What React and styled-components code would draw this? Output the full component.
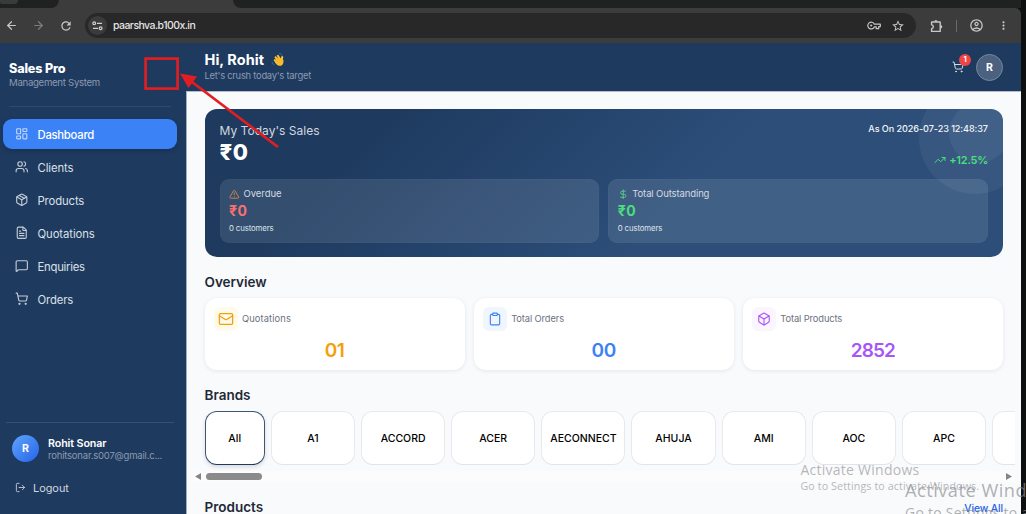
import React from 'react';
import styled, { createGlobalStyle, css } from 'styled-components';
import {
  ArrowLeft,
  ArrowRight,
  Box,
  Clipboard,
  DollarSign,
  FileText,
  LayoutDashboard,
  LogOut,
  Mail,
  MessageSquare,
  Package,
  ShoppingCart,
  TrendingUp,
  TriangleAlert,
  Users,
} from 'lucide-react';
import {
  MdMoreVert,
  MdOutlineAccountCircle,
  MdRefresh,
  MdStarOutline,
} from 'react-icons/md';

const GlobalStyle = createGlobalStyle`
  * {
    box-sizing: border-box;
  }
  body {
    margin: 0;
    background: #0e0f0f;
    font-family: Inter, 'Liberation Sans', sans-serif;
    overflow: hidden;
  }
  svg {
    display: block;
    flex-shrink: 0;
  }
`;

const Screen = styled.div`
  position: relative;
  width: 1026px;
  height: 514px;
  padding-right: 5px;
  overflow: hidden;
  display: flex;
  flex-direction: column;
  background: #0e0f0f;
`;

const Text = styled.span`
  display: block;
  white-space: nowrap;
  font-size: ${(p) => p.$size}px;
  line-height: ${(p) => p.$line || 14}px;
  font-weight: ${(p) => p.$weight || 400};
  letter-spacing: ${(p) => p.$track || 0}px;
  color: ${(p) => p.$color || '#fff'};
`;

/* browser chrome */
const TabStrip = styled.div`
  height: 8px;
  flex-shrink: 0;
  display: flex;
  background: #3c3c3c;
`;

const TabsBefore = styled.div`
  width: 59px;
  height: 8px;
  background: #202222;
  border-bottom-right-radius: 8px;
`;

const TabSearch = styled.div`
  width: 18px;
  height: 4px;
  background: #3a3b3b;
  border-radius: 0 0 6px 3px;
`;

const TabsAfter = styled.div`
  flex: 1;
  margin-left: 174px;
  background: #202222;
  border-bottom-left-radius: 8px;
`;

const Toolbar = styled.div`
  height: 35px;
  flex-shrink: 0;
  display: flex;
  align-items: center;
  padding: 0 11px 0 5px;
  background: #3c3c3c;
  border-top-right-radius: 6px;
  color: #c7c7c7;
`;

const NavButtons = styled.div`
  width: 80px;
  display: flex;
  align-items: center;
  gap: 14px;
`;

const AddressBar = styled.div`
  width: 831px;
  height: 25px;
  display: flex;
  align-items: center;
  padding: 0 11px 0 3px;
  border-radius: 13px;
  background: #282828;
`;

const SiteInfo = styled.div`
  width: 19px;
  height: 19px;
  margin-right: 6px;
  display: grid;
  place-items: center;
  border-radius: 50%;
  background: #3b3b3b;
`;

const AddressIcons = styled.div`
  margin-left: auto;
  display: flex;
  align-items: center;
  gap: 10px;
`;

const ToolbarIcons = styled.div`
  flex: 1;
  display: flex;
  align-items: center;
  justify-content: space-between;
  padding-left: 14px;
`;

const ToolbarDivider = styled.div`
  width: 1px;
  height: 12px;
  background: #6a6a6a;
`;

/* app shell */
const Shell = styled.div`
  flex: 1;
  min-height: 0;
  display: flex;
  background: #f9fafc;
`;

const Sidebar = styled.aside`
  width: 186px;
  flex-shrink: 0;
  display: flex;
  flex-direction: column;
  background: #1e3a5f;
`;

const SidebarTop = styled.div`
  height: 64px;
  margin: 0 15px 12px 9px;
  padding-top: 19px;
  border-bottom: 1px solid #2f4a6e;
`;

const Nav = styled.nav`
  display: flex;
  flex-direction: column;
  gap: 3px;
  padding: 0 9px 0 3px;
`;

const NavItem = styled.div`
  height: 30px;
  display: flex;
  align-items: center;
  gap: 9px;
  padding-left: 12px;
  border-radius: 9px;
  color: #c3cbd6;
  ${(p) =>
    p.$active &&
    css`
      background: #3b82f6;
      color: #c0d7fc;
      box-shadow: 0 2px 4px rgba(16, 32, 60, 0.35);
    `}
`;

const NavLabel = styled(Text)`
  padding-top: 2px;
`;

const SidebarBottom = styled.div`
  height: 92px;
  margin: auto 12px 0 6px;
  padding: 12px 0 0 6px;
  border-top: 1px solid #365073;
`;

const UserRow = styled.div`
  display: flex;
  align-items: center;
  gap: 9px;
`;

const UserText = styled.div`
  padding-top: 2px;
`;

const UserBadge = styled.div`
  width: 27px;
  height: 27px;
  display: grid;
  place-items: center;
  border-radius: 50%;
  background: linear-gradient(135deg, #60a5fa, #2563eb);
`;

const LogoutRow = styled.div`
  display: flex;
  align-items: center;
  gap: 7px;
  margin-top: 17px;
  padding-left: 3px;
  color: #c3cbd6;
`;

const Main = styled.main`
  flex: 1;
  min-width: 0;
  display: flex;
  flex-direction: column;
  border-left: 1px solid #a3afbf;
`;

const Header = styled.header`
  height: 48px;
  margin-left: -1px;
  flex-shrink: 0;
  display: flex;
  align-items: center;
  justify-content: space-between;
  padding: 0 18px 0 18.5px;
  background: #1e3a5f;
  box-shadow: 0 1px 0 #b3bdca;
`;

const Greeting = styled.div`
  display: flex;
  align-items: center;
  gap: 6px;
  padding-top: 1px;
`;

const HeaderActions = styled.div`
  display: flex;
  align-items: center;
  gap: 12px;
  color: #d6dce4;
`;

const Cart = styled.div`
  position: relative;
`;

const CartCount = styled.div`
  position: absolute;
  left: 7px;
  top: -7.5px;
  width: 12px;
  height: 12px;
  display: grid;
  place-items: center;
  border-radius: 50%;
  background: #ef4444;
`;

const HeaderAvatar = styled.div`
  width: 27px;
  height: 27px;
  display: grid;
  place-items: center;
  border: 1px solid #78899f;
  border-radius: 50%;
  background: #4b617f;
`;

const AvatarLetter = styled(Text)`
  padding-top: 1px;
`;

const Content = styled.div`
  flex: 1;
  min-height: 0;
  overflow: hidden;
  padding: 18.3px 18px 0 17.5px;
`;

const SalesCard = styled.section`
  position: relative;
  overflow: hidden;
  height: 148px;
  padding: 12px 15px 14.8px;
  display: flex;
  flex-direction: column;
  justify-content: space-between;
  border-radius: 12px;
  background: linear-gradient(135deg, #1e3a5f 20%, #2c4e79 60%);
`;

const Bubble = styled.div`
  position: absolute;
  left: ${(p) => p.$left}px;
  top: ${(p) => p.$top}px;
  width: ${(p) => p.$size}px;
  height: ${(p) => p.$size}px;
  border-radius: 50%;
  background: rgba(255, 255, 255, 0.055);
`;

const SalesTop = styled.div`
  position: relative;
  display: flex;
  justify-content: space-between;
`;

const SalesMeta = styled.div`
  padding-top: 1px;
  display: flex;
  flex-direction: column;
  align-items: flex-end;
  gap: 17px;
`;

const IconLine = styled.div`
  display: flex;
  align-items: center;
  gap: ${(p) => p.$gap}px;
  color: ${(p) => p.$color};
`;

const DueGrid = styled.div`
  position: relative;
  display: grid;
  grid-template-columns: 1fr 1fr;
  gap: 9px;
`;

const DueBox = styled.div`
  height: 63.5px;
  padding: 7px 8.5px;
  border: 1px solid rgba(255, 255, 255, 0.02);
  border-radius: 9px;
  background: rgba(255, 255, 255, 0.1);
`;

const SectionTitle = styled(Text)`
  margin-top: ${(p) => p.$top || 0}px;
`;

const StatGrid = styled.div`
  display: grid;
  grid-template-columns: repeat(3, 1fr);
  gap: 9px;
  margin: 7px 0 16px;
`;

const StatCard = styled.div`
  height: 72px;
  padding: 9px;
  border-radius: 12px;
  background: #fff;
  box-shadow: 0 1px 4px rgba(20, 30, 50, 0.09);
`;

const StatHead = styled.div`
  display: flex;
  align-items: center;
  gap: 4.5px;
  color: ${(p) => p.$color};
`;

const StatIcon = styled.div`
  width: 24px;
  height: 24px;
  display: grid;
  place-items: center;
  border-radius: 6px;
  background: ${(p) => p.$tint};
`;

const StatValue = styled(Text)`
  text-align: center;
  margin-top: 9px;
`;

const BrandScroller = styled.div`
  margin: 7px -12px 16px;
`;

const BrandRow = styled.div`
  display: flex;
  gap: 6px;
  padding: 0 0 6px 12px;
  overflow: hidden;
`;

const Brand = styled.div`
  width: ${(p) => (p.$active ? 60.4 : 84.15)}px;
  height: 54px;
  flex-shrink: 0;
  display: grid;
  place-items: center;
  border: 1px solid ${(p) => (p.$active ? '#3f5777' : '#e7e9ec')};
  border-bottom-color: ${(p) => (p.$active ? '#1e3a5f' : '#e2e4e8')};
  border-radius: 12px;
  background: #fff;
  box-shadow: ${(p) => (p.$active ? '0 2px 4px rgba(20, 30, 50, 0.15)' : 'none')};
`;

const BrandName = styled(Text)`
  padding-top: 2px;
`;

const ScrollTrack = styled.div`
  height: 11px;
  display: flex;
  align-items: center;
  padding: 0 3px 0 2px;
  background: #fcfcfc;
`;

const ScrollThumb = styled.div`
  width: 56px;
  height: 7px;
  margin: 0 auto 0 5px;
  border-radius: 4px;
  background: #8b8b8b;
`;

const SectionHead = styled.div`
  display: flex;
  align-items: center;
  justify-content: space-between;
`;

const ViewAll = styled(Text)`
  padding-top: 2px;
`;

const Watermark = styled.div`
  position: absolute;
  left: ${(p) => p.$left}px;
  top: ${(p) => p.$top}px;
  font-family: 'Open Sans', 'Noto Sans', sans-serif;
`;

const Callout = styled.svg`
  position: absolute;
  left: 140px;
  top: 52px;
`;

const navItems = [
  { label: 'Dashboard', icon: LayoutDashboard, track: -0.27 },
  { label: 'Clients', icon: Users, track: -0.1 },
  { label: 'Products', icon: Package, track: -0.12 },
  { label: 'Quotations', icon: FileText, track: -0.08 },
  { label: 'Enquiries', icon: MessageSquare, track: -0.25 },
  { label: 'Orders', icon: ShoppingCart, track: -0.12 },
];

const dues = [
  { label: 'Overdue', icon: TriangleAlert, iconColor: '#d98a4c', color: '#f87171', track: -0.05 },
  { label: 'Total Outstanding', icon: DollarSign, iconColor: '#5bd08c', color: '#4ade80', track: -0.12 },
];

const stats = [
  { label: 'Quotations', value: '01', icon: Mail, color: '#f59e0b', tint: '#fffbeb', track: 0.12 },
  { label: 'Total Orders', value: '00', icon: Clipboard, color: '#3b82f6', tint: '#eff6ff', track: -0.1 },
  { label: 'Total Products', value: '2852', icon: Box, color: '#a855f7', tint: '#faf5ff', track: -0.1 },
];

const brands = ['All', 'A1', 'ACCORD', 'ACER', 'AECONNECT', 'AHUJA', 'AMI', 'AOC', 'APC', ''];

const TuneIcon = () => (
  <svg width="11" height="10" viewBox="0 0 11 10" fill="none" stroke="#d0d0d0" strokeWidth="1.2">
    <circle cx="2.2" cy="2.3" r="1.4" />
    <path d="M5 2.3h5M1 7.3h5" />
    <circle cx="8.6" cy="7.3" r="1.4" />
  </svg>
);

const KeyIcon = () => (
  <svg width="14" height="9" viewBox="0 0 14 9" fill="none" stroke="#c7c7c7" strokeWidth="1.2">
    <path d="M7.3 3.2a3.4 3.4 0 1 0 0 2.7h1.9v1.8h2.5V5.6h1.6V3.2z" strokeLinejoin="round" />
    <circle cx="4.2" cy="4.5" r="1.1" fill="#c7c7c7" stroke="none" />
  </svg>
);

const ExtensionIcon = () => (
  <svg width="13" height="14" viewBox="0 0 13 14" fill="none">
    <path
      d="M1.6 3h8.6v9.4H1.6V9.6c2.3-.3 2.3-3.5 0-3.8z"
      stroke="#c7c7c7"
      strokeWidth="1.4"
      strokeLinejoin="round"
    />
    <path d="M4.2 2.6a1.7 1.7 0 0 1 3.4 0zM10.6 6a1.7 1.7 0 0 1 0 3.4z" fill="#c7c7c7" />
  </svg>
);

const WaveIcon = () => (
  <svg width="15" height="15" viewBox="0 0 15 15" fill="none" strokeLinecap="round">
    <path d="M4.8 8.2 8.6 12.2M5.6 5.4l4 5M7.8 3.8l3.2 5M12.2 5.1l-.6 4" stroke="#fbc02d" strokeWidth="2.1" />
    <path d="M5 8.6 8.5 5.4l3 1.4 1.9 1.1c.5 3.5-1 6-3.8 5.8-2 0-3.2-1.8-4.6-3.3z" fill="#fbbc2c" />
    <path d="m6.2 8.1 2.2 2M7.6 6.4l2.3 2.2" stroke="#e79a20" strokeWidth=".5" />
    <path d="M9.6 1.4c1.2.1 2.1.8 2.5 2M2.2 10.5c.2 1 .8 1.7 1.7 2.1" stroke="#2783bd" strokeWidth=".8" />
  </svg>
);

const ScrollArrow = ({ right }) => (
  <svg width="6" height="7" viewBox="0 0 6 7" fill="#858585">
    <path d={right ? 'M0 0v7l6-3.5z' : 'M6 0v7L0 3.5z'} />
  </svg>
);

const BrowserChrome = () => (
  <>
    <TabStrip>
      <TabsBefore>
        <TabSearch />
      </TabsBefore>
      <TabsAfter />
    </TabStrip>
    <Toolbar>
      <NavButtons>
        <ArrowLeft size={13} strokeWidth={2.2} />
        <ArrowRight size={13} strokeWidth={2.2} color="#7c7c7c" />
        <MdRefresh size={14} />
      </NavButtons>
      <AddressBar>
        <SiteInfo>
          <TuneIcon />
        </SiteInfo>
        <Text $size={10.5} $color="#e4e4e4" $track={-0.55} $weight={500}>paarshva.b100x.in</Text>
        <AddressIcons>
          <KeyIcon />
          <MdStarOutline size={14} />
        </AddressIcons>
      </AddressBar>
      <ToolbarIcons>
        <ExtensionIcon />
        <ToolbarDivider />
        <MdOutlineAccountCircle size={15} />
        <MdMoreVert size={13} />
      </ToolbarIcons>
    </Toolbar>
  </>
);

const App = () => {
  return (
    <Screen>
      <GlobalStyle />
      <BrowserChrome />
      <Shell>
        <Sidebar>
          <SidebarTop>
            <Text $size={12.6} $weight={800} $track={-0.15}>Sales Pro</Text>
            <Text $size={9.6} $color="#8c9bb0" $track={-0.28}>Management System</Text>
          </SidebarTop>
          <Nav>
            {navItems.map(({ label, icon: Icon, track }, i) => (
              <NavItem key={label} $active={i === 0}>
                <Icon size={13.5} strokeWidth={2} />
                <NavLabel $size={11.3} $weight={i === 0 ? 500 : 400} $track={track} $color={i === 0 ? '#fff' : '#dbe0e7'}>
                  {label}
                </NavLabel>
              </NavItem>
            ))}
          </Nav>
          <SidebarBottom>
            <UserRow>
              <UserBadge>
                <AvatarLetter $size={10.5} $weight={700}>R</AvatarLetter>
              </UserBadge>
              <UserText>
                <Text $size={10.7} $weight={600} $line={13} $track={-0.1}>Rohit Sonar</Text>
                <Text $size={9.5} $line={12} $color="#8c9bb0" $track={-0.2}>rohitsonar.s007@gmail.c...</Text>
              </UserText>
            </UserRow>
            <LogoutRow>
              <LogOut size={11} />
              <NavLabel $size={10.9} $color="#d2d8e0">Logout</NavLabel>
            </LogoutRow>
          </SidebarBottom>
        </Sidebar>

        <Main>
          <Header>
            <div>
              <Greeting>
                <Text $size={14.5} $line={17} $weight={700} $track={0.05}>Hi, Rohit</Text>
                <WaveIcon />
              </Greeting>
              <Text $size={9.4} $line={16} $color="#8c9bb0" $track={-0.25}>Let's crush today's target</Text>
            </div>
            <HeaderActions>
              <Cart>
                <ShoppingCart size={12} />
                <CartCount>
                  <Text $size={7.5} $line={9} $weight={700}>1</Text>
                </CartCount>
              </Cart>
              <HeaderAvatar>
                <AvatarLetter $size={10.5} $weight={700}>R</AvatarLetter>
              </HeaderAvatar>
            </HeaderActions>
          </Header>

          <Content>
            <SalesCard>
              <Bubble $left={714.5} $top={-27} $size={112} />
              <Bubble $left={744.5} $top={-6} $size={60} />
              <SalesTop>
                <div>
                  <Text $size={12} $line={19} $color="#d2d8df" $track={0.03}>My Today's Sales</Text>
                  <Text $size={22} $line={25} $weight={800} $track={0.5}>₹0</Text>
                </div>
                <SalesMeta>
                  <Text $size={9.1} $weight={500} $color="#f3f5f8" $track={-0.08}>As On 2026-07-23 12:48:37</Text>
                  <IconLine $gap={3} $color="#4ade80">
                    <TrendingUp size={12} />
                    <Text $size={11} $weight={600} $color="#4ade80" $track={-0.25}>+12.5%</Text>
                  </IconLine>
                </SalesMeta>
              </SalesTop>
              <DueGrid>
                {dues.map(({ label, icon: Icon, iconColor, color, track }) => (
                  <DueBox key={label}>
                    <IconLine $gap={4} $color={iconColor}>
                      <Icon size={10.5} />
                      <Text $size={9.5} $color="#d5dae1" $track={track}>{label}</Text>
                    </IconLine>
                    <Text $size={14} $line={20} $weight={700} $color={color} $track={0.6}>₹0</Text>
                    <Text $size={7.8} $color="#dfe4ea" $track={-0.12}>0 customers</Text>
                  </DueBox>
                ))}
              </DueGrid>
            </SalesCard>

            <SectionTitle $size={13.5} $line={18} $weight={600} $color="#1f2937" $top={15.7}>Overview</SectionTitle>
            <StatGrid>
              {stats.map(({ label, value, icon: Icon, color, tint, track }) => (
                <StatCard key={label}>
                  <StatHead $color={color}>
                    <StatIcon $tint={tint}>
                      <Icon size={label === 'Quotations' ? 16 : 14} strokeWidth={1.9} />
                    </StatIcon>
                    <Text $size={9.3} $color="#6b7280" $track={track}>{label}</Text>
                  </StatHead>
                  <StatValue $size={19} $line={22} $weight={600} $color={color} $track={value === '2852' ? -0.9 : -0.4}>
                    {value}
                  </StatValue>
                </StatCard>
              ))}
            </StatGrid>

            <SectionTitle $size={13.5} $line={18} $weight={600} $color="#1f2937">Brands</SectionTitle>
            <BrandScroller>
              <BrandRow>
                {brands.map((name, i) => (
                  <Brand key={name} $active={i === 0}>
                    <BrandName $size={10.5} $weight={500} $color="#000">{name}</BrandName>
                  </Brand>
                ))}
              </BrandRow>
              <ScrollTrack>
                <ScrollArrow />
                <ScrollThumb />
                <ScrollArrow right />
              </ScrollTrack>
            </BrandScroller>

            <SectionHead>
              <SectionTitle $size={13.5} $line={18} $weight={600} $color="#1f2937">Products</SectionTitle>
              <ViewAll $size={10.3} $weight={500} $color="#2563eb" $track={-0.1}>View All</ViewAll>
            </SectionHead>
          </Content>
        </Main>
      </Shell>

      <Watermark $left={800.5} $top={460}>
        <Text $size={14} $line={19} $color="rgba(150, 152, 154, 0.7)" $track={0.25}>Activate Windows</Text>
        <Text $size={10.7} $line={15} $color="rgba(150, 152, 154, 0.7)" $track={0.1}>Go to Settings to activate Windows.</Text>
      </Watermark>
      <Watermark $left={905} $top={478}>
        <Text $size={18.2} $line={25} $color="rgba(140, 142, 144, 0.7)" $track={0.5}>Activate Windows</Text>
        <Text $size={14} $line={20} $color="rgba(140, 142, 144, 0.7)" $track={0.25}>Go to Settings to activate Windows.</Text>
      </Watermark>

      <Callout width="145" height="100" viewBox="140 52 145 100" fill="none">
        <rect x="145.6" y="58.6" width="32" height="30" stroke="#e41e20" strokeWidth="2.6" />
        <path d="M190 80.5 278 147" stroke="#e41e20" strokeWidth="2.7" />
        <path d="M180 73.5 197 76.5 188.5 88z" fill="#e41e20" />
      </Callout>
    </Screen>
  );
};

export default App;
